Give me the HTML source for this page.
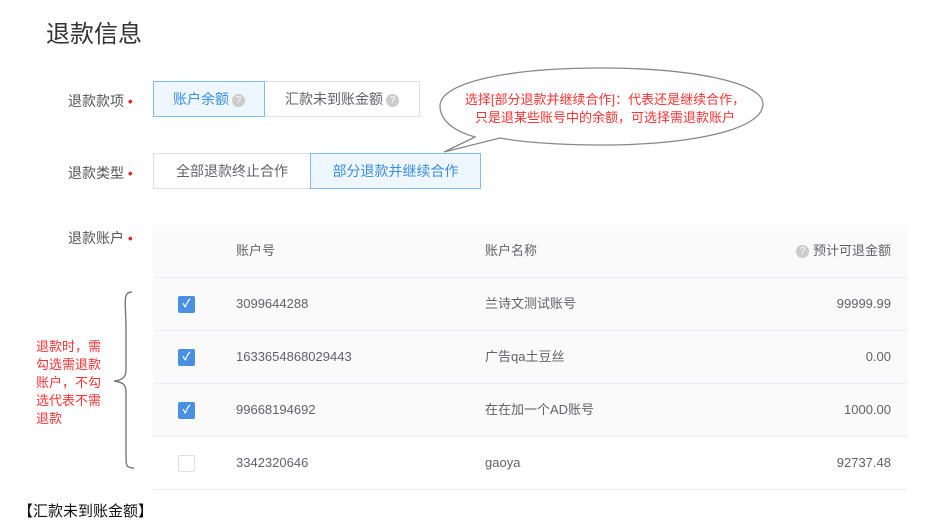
<!DOCTYPE html>
<html><head><meta charset="utf-8"><style>
*{margin:0;padding:0;box-sizing:border-box}
body{width:937px;height:529px;background:#fff;position:relative;overflow:hidden;font-family:"Liberation Sans","Noto Sans CJK SC",sans-serif;color:#555;font-size:13px}
.a{position:absolute;white-space:nowrap}
.lab{font-size:14px;color:#555}
.dot{color:#e5252a;font-size:14px}
.btn{position:absolute;height:36px;border:1px solid #dcdfe6;background:#fff;font-size:14px;color:#606266;line-height:34px;text-align:center}
.sel{border-color:#7fbcf3;background:#eef7ff;color:#3a8ee6;z-index:2}
.q{display:inline-block;width:13px;height:13px;border-radius:50%;background:#ccc;color:#fff;font-size:10px;line-height:13px;text-align:center;vertical-align:1px;margin-left:3px}
.row{position:absolute;left:153px;width:755px;height:53px;border-bottom:1px solid #ebeef5;background:#fafafa;font-size:13px;color:#606266}
.row span.c{position:absolute;top:0;height:52px;line-height:52px}
.cb{position:absolute;left:25px;top:18px;width:17px;height:17px;border-radius:2px;background:#4a90e2;color:#fff;font-size:11px;text-align:center;line-height:17px;font-weight:bold}
.cb.off{background:#fff;border:1px solid #dcdfe6}
</style></head><body>
<div class="a" style="left:46px;top:14px;font-size:24px;color:#333">退款信息</div>

<div class="a lab" style="left:68px;top:91px">退款款项 <span class="dot">•</span></div>
<div class="btn sel" style="left:153px;top:81px;width:112px">账户余额<span class="q">?</span></div>
<div class="btn" style="left:264px;top:81px;width:156px">汇款未到账金额<span class="q">?</span></div>

<div class="a lab" style="left:68px;top:163px">退款类型 <span class="dot">•</span></div>
<div class="btn" style="left:153px;top:153px;width:158px">全部退款终止合作</div>
<div class="btn sel" style="left:310px;top:153px;width:171px">部分退款并继续合作</div>

<svg class="a" style="left:430px;top:60px" width="340" height="100"><path d="M170 8 C260 8 333 22 333 44 C333 70 260 85 170 85 C130 85 90 82 70 78 L14 92 L45 77 C20 70 10 58 10 46 C10 22 80 8 170 8Z" fill="#fff" stroke="#888" stroke-width="1.3"/></svg>
<div class="a" style="left:449px;top:91px;font-size:13px;color:#ff3333;line-height:18px;text-align:center;width:312px">选择[部分退款并继续合作]：代表还是继续合作，<br>只是退某些账号中的余额，可选择需退款账户</div>

<div class="a lab" style="left:68px;top:228px">退款账户 <span class="dot">•</span></div>
<div class="a" style="left:153px;top:225px;width:755px;height:264px;border:1px solid #ebeef5;border-radius:3px"></div>
<div class="row" style="top:225px;height:53px"><span class="c" style="left:83px">账户号</span><span class="c" style="left:332px">账户名称</span><span class="c" style="right:17px"><span class="q" style="margin-right:4px">?</span>预计可退金额</span></div>
<div class="row" style="top:278px"><div class="cb">✓</div><span class="c" style="left:83px">3099644288</span><span class="c" style="left:332px">兰诗文测试账号</span><span class="c" style="right:17px">99999.99</span></div>
<div class="row" style="top:331px"><div class="cb">✓</div><span class="c" style="left:83px">1633654868029443</span><span class="c" style="left:332px">广告qa土豆丝</span><span class="c" style="right:17px">0.00</span></div>
<div class="row" style="top:384px"><div class="cb">✓</div><span class="c" style="left:83px">99668194692</span><span class="c" style="left:332px">在在加一个AD账号</span><span class="c" style="right:17px">1000.00</span></div>
<div class="row" style="top:437px;background:#fff"><div class="cb off"></div><span class="c" style="left:83px">3342320646</span><span class="c" style="left:332px">gaoya</span><span class="c" style="right:17px">92737.48</span></div>

<svg class="a" style="left:108px;top:290px" width="30" height="180"><path d="M24 2 C14 2 18 12 18 40 L18 80 C18 88 14 90 6 91 C14 92 18 94 18 102 L18 165 C18 176 18 178 26 178" fill="none" stroke="#777" stroke-width="1.4"/></svg>
<div class="a" style="left:36px;top:338px;font-size:13px;color:#ff3333;line-height:18px">退款时，需<br>勾选需退款<br>账户，不勾<br>选代表不需<br>退款</div>

<div class="a" style="left:18px;top:500px;font-size:15px;color:#111">【汇款未到账金额】</div>
</body></html>
